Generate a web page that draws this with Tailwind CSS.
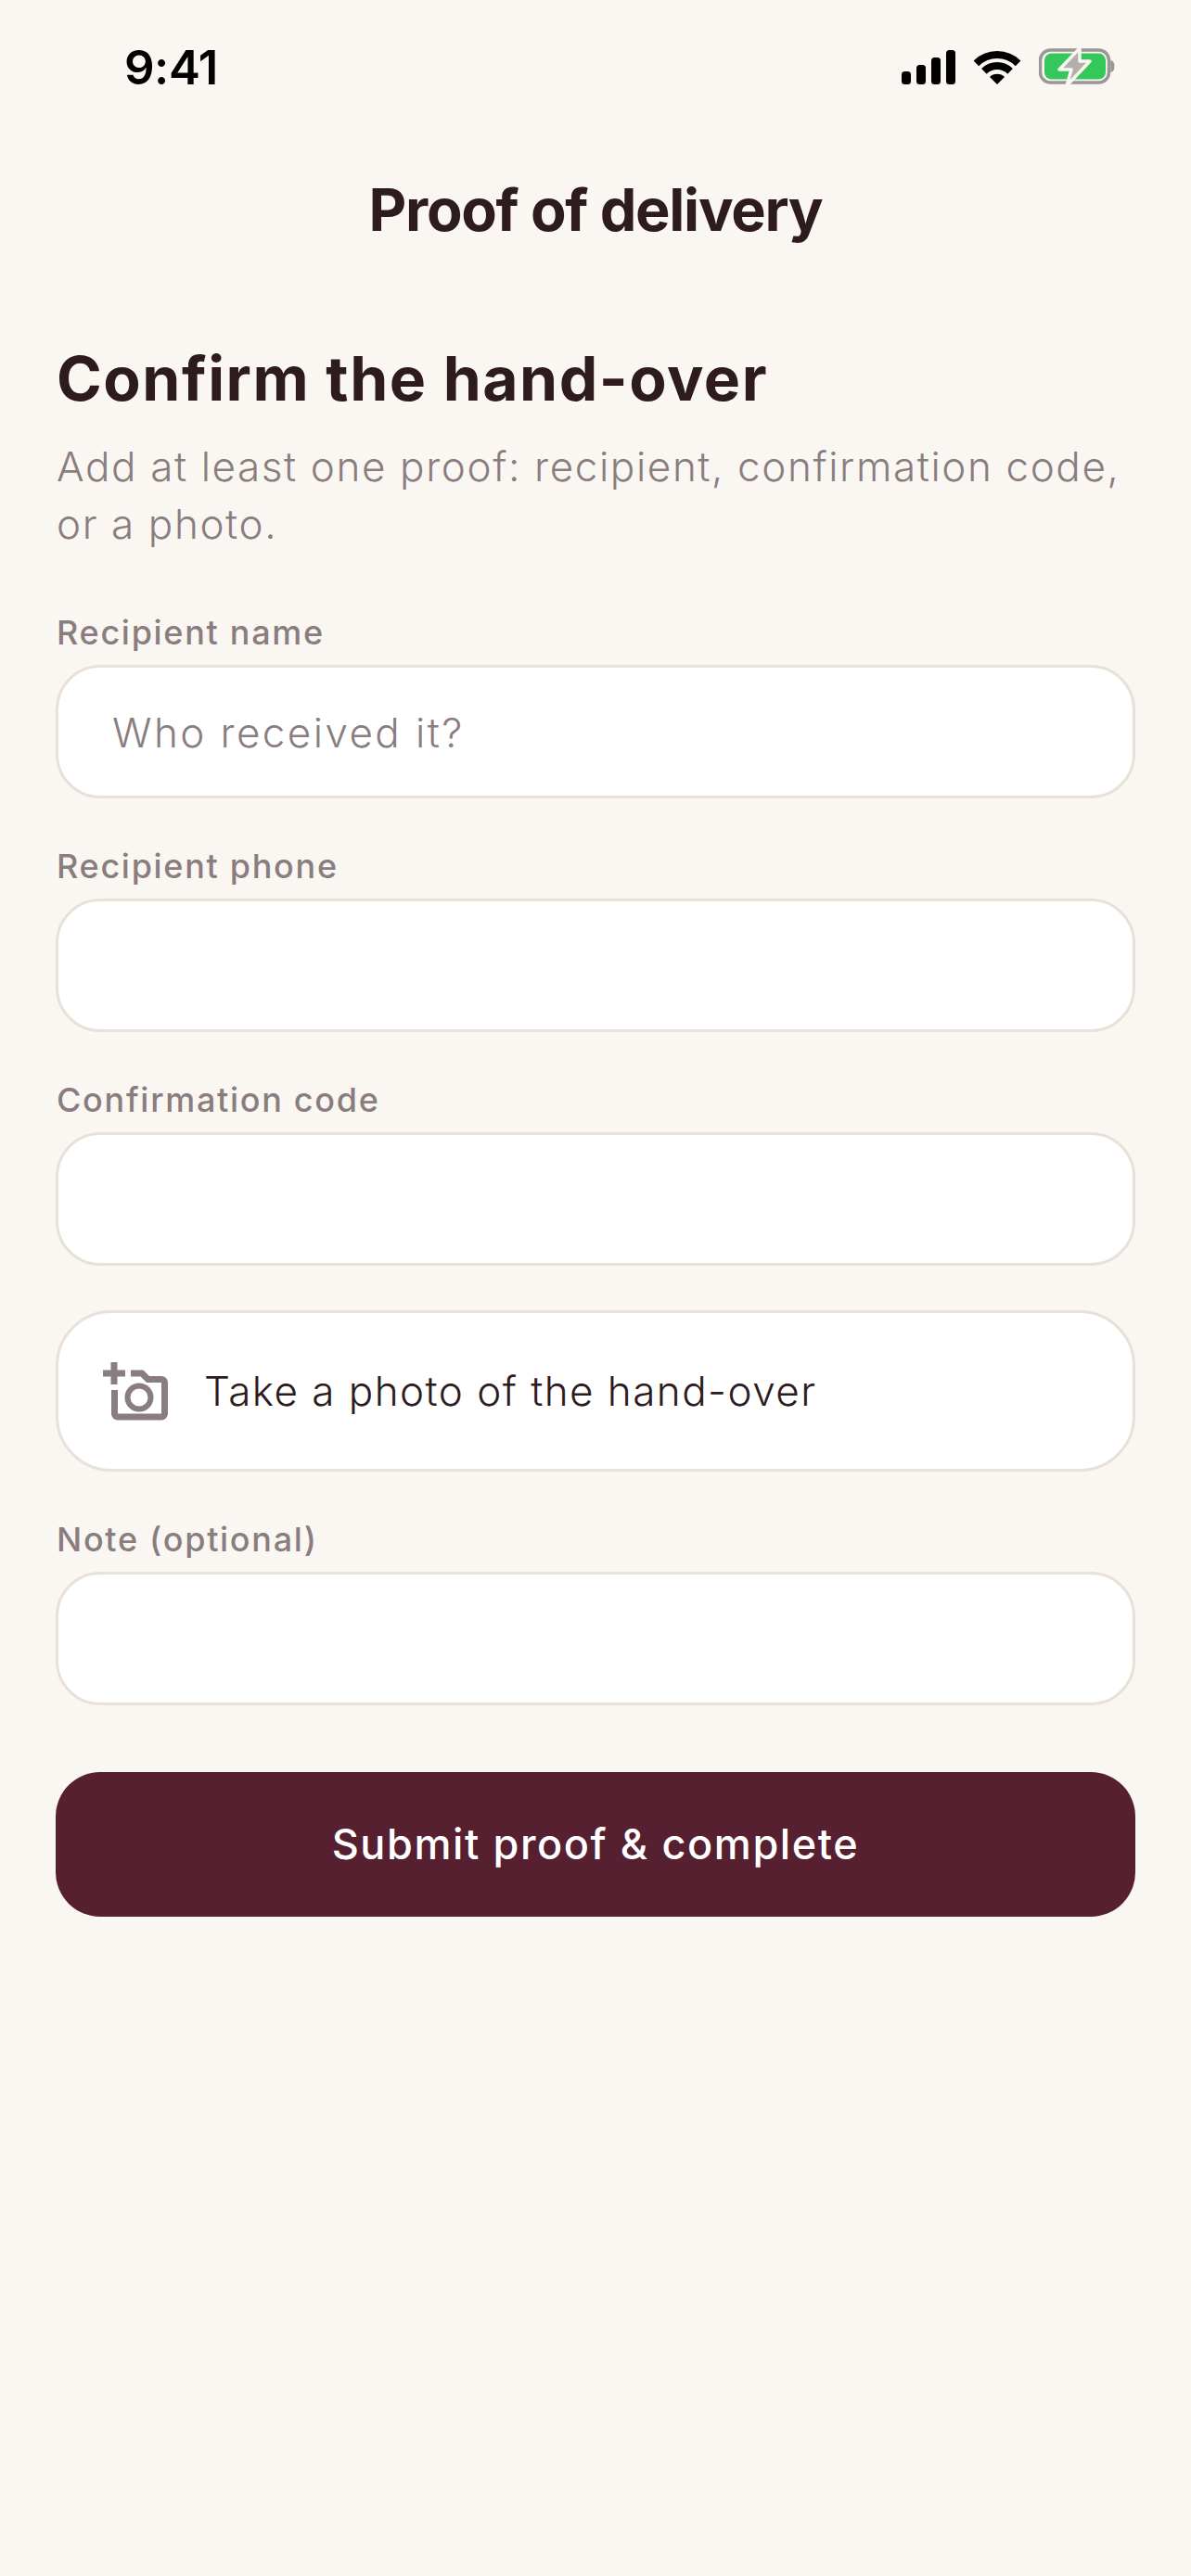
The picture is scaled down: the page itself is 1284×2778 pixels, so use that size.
<!DOCTYPE html>
<html lang="en">
<head>
<meta charset="UTF-8">
<title>Proof of delivery</title>
<script src="https://cdn.jsdelivr.net/npm/@tailwindcss/browser@4"></script>
</head>
<body class="bg-[#faf7f2] font-['Inter',sans-serif] text-[#2d1b20]">
<div class="w-[1284px] h-[2778px] flex flex-col">
  <!-- status bar -->
  <div class="h-[132px] flex items-center justify-between pl-[134px] pr-[82px] pt-[12px] shrink-0">
    <span class="text-[51px] leading-none font-semibold text-black tracking-[-0.5px]">9:41</span>
    <div class="flex items-center gap-[20px]">
      <svg width="58" height="37" viewBox="0 0 58 37" fill="#000"><rect x="0" y="23" width="10" height="14" rx="3.5"/><rect x="16" y="16" width="10" height="21" rx="3.5"/><rect x="32" y="8" width="10" height="29" rx="3.5"/><rect x="48" y="0" width="10" height="37" rx="3.5"/></svg>
      <svg width="50" height="37" viewBox="0 0 50 37" fill="none" stroke="#000" stroke-width="8" class="overflow-visible"><path d="M2.400 14.400A32 32 0 0 1 47.600 14.400"/><path d="M10.900 22.900A20 20 0 0 1 39.100 22.900"/><path fill="#000" stroke="none" d="M25 37L17 29A11.500 11.500 0 0 1 33 29Z"/></svg>
      <svg width="82" height="42" viewBox="0 0 82 42" fill="none"><rect x="1.500" y="3" width="74" height="35" rx="11" stroke="#9a9794" stroke-width="3.500"/><rect x="6" y="6.500" width="66" height="28" rx="7.500" fill="#34c759"/><path d="M78 15C81.500 16 81.500 25 78 26Z" fill="#9a9794" stroke="#9a9794" stroke-width="1.500"/><path d="M44 1L22 24H35L30 41.500L55 15H44Z" fill="#b3afab" stroke="#faf7f2" stroke-width="3.500" stroke-linejoin="round"/></svg>
    </div>
  </div>
  <!-- header -->
  <h1 class="h-[196px] flex items-center justify-center pb-[8px] text-[63px] font-bold tracking-[-1.300px] leading-none shrink-0">Proof of delivery</h1>
  <main class="px-[60px] flex flex-col">
    <h2 class="mt-[40px] ml-[1px] text-[66px] leading-[80px] font-bold tracking-[1.500px]">Confirm the hand-over</h2>
    <p class="mt-[24px] ml-[1px] text-[44px] leading-[62px] text-[#8a7d7f] font-light tracking-[1.600px]">Add at least one proof: recipient, confirmation code, or a photo.</p>
    <label class="mt-[62px] ml-[1px] text-[36px] leading-[48px] font-medium text-[#8a7d7f] tracking-[1.700px]">Recipient name</label>
    <div class="mt-[11px] h-[144px] rounded-[48px] border-[3px] border-[#e8e1d8] bg-white flex items-center pl-[58px] pt-[2px] text-[44px] font-light text-[#8a7d7f] tracking-[2.400px]">Who received it?</div>
    <label class="mt-[49px] ml-[1px] text-[36px] leading-[48px] font-medium text-[#8a7d7f] tracking-[1.700px]">Recipient phone</label>
    <div class="mt-[11px] h-[144px] rounded-[48px] border-[3px] border-[#e8e1d8] bg-white"></div>
    <label class="mt-[49px] ml-[1px] text-[36px] leading-[48px] font-medium text-[#8a7d7f] tracking-[1.700px]">Confirmation code</label>
    <div class="mt-[11px] h-[144px] rounded-[48px] border-[3px] border-[#e8e1d8] bg-white"></div>
    <div class="mt-[48px] h-[174px] rounded-[60px] border-[3px] border-[#e8e1d8] bg-white flex items-center pl-[48px] gap-[39px] text-[44px] font-light tracking-[1.450px]">
      <svg width="70" height="63" viewBox="0 0 70 63" fill="none" stroke="#8a7d7f" stroke-width="7"><path d="M12 0V24M0 12H24"/><path d="M30 12H42L48.500 18.500H63C65 18.500 66.500 20 66.500 22V55.500C66.500 57.500 65 59 63 59H16C14 59 12.500 57.500 12.500 55.500V30"/><circle cx="39" cy="38" r="12.500" stroke-width="6"/></svg>
      <span>Take a photo of the hand-over</span>
    </div>
    <label class="mt-[49px] ml-[1px] text-[36px] leading-[48px] font-medium text-[#8a7d7f] tracking-[1.700px]">Note (optional)</label>
    <div class="mt-[11px] h-[144px] rounded-[48px] border-[3px] border-[#e8e1d8] bg-white"></div>
    <button class="mt-[72px] h-[156px] rounded-[48px] bg-[#562030] text-white text-[45px] font-medium tracking-[1.600px]">Submit proof &amp; complete</button>
  </main>
</div>
</body>
</html>
